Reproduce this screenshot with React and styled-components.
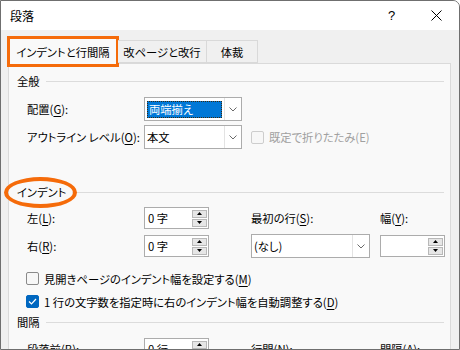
import React from 'react';
import styled, { createGlobalStyle } from 'styled-components';

const GlobalStyle = createGlobalStyle`
  body {
    margin: 0;
    background: #fff;
    font-family: "Noto Sans CJK JP", "Noto Sans", sans-serif;
    font-size: 11.3px;
    font-feature-settings: "palt";
    color: #000;
  }
`;

const Window = styled.div`
  width: 460px;
  height: 350px;
  box-sizing: border-box;
  border: 1px solid #6f6f6f;
  border-top-right-radius: 7px;
  background: #f0f0f0;
  display: flex;
  flex-direction: column;
  overflow: hidden;
`;

const TitleBar = styled.div`
  height: 29px;
  flex: none;
  background: #fff;
  display: flex;
  align-items: center;
  padding-left: 9px;
`;

const Title = styled.div`
  flex: 1;
  font-size: 12px;
`;

const TitleButton = styled.div`
  width: 45px;
  height: 29px;
  display: flex;
  align-items: center;
  justify-content: center;
  font-family: "Liberation Sans", sans-serif;
  font-size: 13px;
`;

const Body = styled.div`
  flex: 1;
  display: flex;
  flex-direction: column;
  padding: 8px 8px 0 7px;
  min-height: 0;
`;

const TabRow = styled.div`
  display: flex;
  align-items: flex-end;
  height: 26px;
  position: relative;
  z-index: 1;
`;

const Tab = styled.div`
  position: relative;
  box-sizing: border-box;
  width: ${p => p.$w}px;
  height: ${p => (p.$active ? 26 : 23)}px;
  margin-bottom: ${p => (p.$active ? -1 : 0)}px;
  border: 1px solid #d9d9d9;
  border-bottom: ${p => (p.$active ? 'none' : '1px solid #d9d9d9')};
  border-left: ${p => (p.$first || p.$active ? '1px solid #d9d9d9' : 'none')};
  background: ${p => (p.$active ? '#f9f9f9' : '#f0f0f0')};
  display: flex;
  align-items: center;
  justify-content: center;
  white-space: nowrap;
`;

const TabHighlight = styled.div`
  position: absolute;
  left: -2px;
  top: -3px;
  width: 112px;
  height: 31px;
  box-sizing: border-box;
  border: 3px solid #f56b0a;
  pointer-events: none;
`;

const Panel = styled.div`
  flex: 1;
  background: #f9f9f9;
  border: 1px solid #dadada;
  border-bottom: none;
  width: 443px;
  box-sizing: border-box;
  padding: 9px 6px 0 8px;
  display: flex;
  flex-direction: column;
`;

const SectionHeader = styled.div`
  position: relative;
  height: 16px;
  display: flex;
  align-items: center;
  gap: 6px;
  margin-top: ${p => p.$mt || 0}px;
`;

const SectionRule = styled.div`
  flex: 1;
  height: 1px;
  background: #dcdcdc;
`;

const Annotation = styled.div`
  position: absolute;
  left: -13px;
  top: -7px;
  width: 73px;
  height: 31px;
  box-sizing: border-box;
  border: 4px solid #f56b0a;
  border-radius: 50%;
  pointer-events: none;
`;

const Grid = styled.div`
  display: grid;
  grid-template-columns: ${p => p.$cols};
  grid-auto-rows: ${p => p.$rowH}px;
  row-gap: ${p => p.$gap}px;
  align-items: center;
  margin: ${p => p.$mt}px 0 0 10px;
`;

const Label = styled.div`
  white-space: nowrap;
  color: ${p => (p.$disabled ? '#a0a0a0' : '#000')};
`;

const Key = styled.span`
  text-decoration: underline;
  text-underline-offset: 2px;
`;

const Select = styled.div`
  box-sizing: border-box;
  width: ${p => p.$w}px;
  height: 24px;
  border: 1px solid #acacac;
  background: #fff;
  display: flex;
`;

const SelectValue = styled.div`
  flex: 1;
  display: flex;
  align-items: center;
  padding: 0 2px;
  min-width: 0;
`;

const Highlight = styled.div`
  flex: 1;
  height: 17px;
  box-sizing: border-box;
  border: 1px dotted #3a2a10;
  background: #0078d7;
  color: #fff;
  display: flex;
  align-items: center;
  padding-left: 1px;
`;

const SelectButton = styled.div`
  width: 16px;
  border-left: 1px solid #e3e3e3;
  display: flex;
  align-items: center;
  justify-content: center;
`;

const Spin = styled.div`
  box-sizing: border-box;
  width: 65px;
  height: 22px;
  border: 1px solid #acacac;
  background: #fff;
  display: flex;
  align-items: center;
  padding: 0 1px 0 3px;
`;

const SpinText = styled.div`
  flex: 1;
`;

const SpinButtons = styled.div`
  width: 15px;
  display: flex;
  flex-direction: column;
  gap: 1px;
`;

const SpinButton = styled.div`
  height: 8px;
  box-sizing: border-box;
  border: 1px solid #b8b8b8;
  background: #e6e6e6;
  display: flex;
  align-items: center;
  justify-content: center;
`;

const CheckRow = styled.div`
  display: flex;
  align-items: center;
  gap: 5px;
  height: 23px;
  white-space: nowrap;
`;

const Box = styled.div`
  width: 13px;
  height: 13px;
  box-sizing: border-box;
  border-radius: 2px;
  border: 1px solid ${p => (p.$checked ? '#0067c0' : p.$disabled ? '#cdcdcd' : '#8a8a8a')};
  background: ${p => (p.$checked ? '#0067c0' : '#f7f7f7')};
  display: flex;
  align-items: center;
  justify-content: center;
`;

const CheckList = styled.div`
  margin: 10px 0 0 9px;
`;

const Chevron = () => (
  <svg width="8" height="5" viewBox="0 0 8 5">
    <path d="M0.5 0.5 L4 4 L7.5 0.5" fill="none" stroke="#6a6a6a" strokeWidth="1" />
  </svg>
);

const Arrow = ({ up }) => (
  <svg width="5" height="3" viewBox="0 0 5 3">
    <path d={up ? 'M2.5 0 L5 3 L0 3 Z' : 'M0 0 L5 0 L2.5 3 Z'} fill="#000" />
  </svg>
);

function Dropdown({ w, value, selected }) {
  return (
    <Select $w={w}>
      <SelectValue>
        {selected ? <Highlight>{value}</Highlight> : value}
      </SelectValue>
      <SelectButton>
        <Chevron />
      </SelectButton>
    </Select>
  );
}

function Spinner({ value }) {
  return (
    <Spin>
      <SpinText>{value}</SpinText>
      <SpinButtons>
        <SpinButton><Arrow up /></SpinButton>
        <SpinButton><Arrow /></SpinButton>
      </SpinButtons>
    </Spin>
  );
}

function Check({ checked, disabled, children }) {
  return (
    <CheckRow>
      <Box $checked={checked} $disabled={disabled}>
        {checked && (
          <svg width="9" height="7" viewBox="0 0 9 7">
            <path d="M1 3.5 L3.5 6 L8 1" fill="none" stroke="#fff" strokeWidth="1.2" />
          </svg>
        )}
      </Box>
      <Label $disabled={disabled}>{children}</Label>
    </CheckRow>
  );
}

export default function App() {
  return (
    <>
      <GlobalStyle />
      <Window>
        <TitleBar>
          <Title>段落</Title>
          <TitleButton>?</TitleButton>
          <TitleButton>
            <svg width="11" height="11" viewBox="0 0 11 11">
              <path d="M0.5 0.5 L10.5 10.5 M10.5 0.5 L0.5 10.5" stroke="#000" strokeWidth="1" />
            </svg>
          </TitleButton>
        </TitleBar>
        <Body>
          <TabRow>
            <Tab $w={110} $active $first>
              インデントと行間隔
              <TabHighlight />
            </Tab>
            <Tab $w={89}>改ページと改行</Tab>
            <Tab $w={51}>体裁</Tab>
          </TabRow>
          <Panel>
            <SectionHeader>
              <Label>全般</Label>
              <SectionRule />
            </SectionHeader>
            <Grid $cols="117px 98px 9px auto" $rowH={24} $gap={4} $mt={8}>
              <Label>配置(<Key>G</Key>):</Label>
              <Dropdown w={98} value="両端揃え" selected />
              <span />
              <span />
              <Label>アウトライン レベル(<Key>O</Key>):</Label>
              <Dropdown w={98} value="本文" />
              <span />
              <Check disabled>既定で折りたたみ(E)</Check>
            </Grid>
            <SectionHeader $mt={35}>
              <Label>インデント</Label>
              <SectionRule />
              <Annotation />
            </SectionHeader>
            <Grid $cols="117px 65px 42px 129px 65px" $rowH={22} $gap={6} $mt={7}>
              <Label>左(<Key>L</Key>):</Label>
              <Spinner value="0 字" />
              <span />
              <Label>最初の行(<Key>S</Key>):</Label>
              <Label>幅(<Key>Y</Key>):</Label>
              <Label>右(<Key>R</Key>):</Label>
              <Spinner value="0 字" />
              <span />
              <Dropdown w={119} value="(なし)" />
              <Spin>
                <SpinText />
                <SpinButtons>
                  <SpinButton><Arrow up /></SpinButton>
                  <SpinButton><Arrow /></SpinButton>
                </SpinButtons>
              </Spin>
            </Grid>
            <CheckList>
              <Check>見開きページのインデント幅を設定する(<Key>M</Key>)</Check>
              <Check checked>1 行の文字数を指定時に右のインデント幅を自動調整する(<Key>D</Key>)</Check>
            </CheckList>
            <SectionHeader $mt={1}>
              <Label>間隔</Label>
              <SectionRule />
            </SectionHeader>
            <Grid $cols="117px 65px 42px 129px 65px" $rowH={22} $gap={6} $mt={8}>
              <Label>段落前(<Key>B</Key>):</Label>
              <Spinner value="0 行" />
              <span />
              <Label>行間(<Key>N</Key>):</Label>
              <Label>間隔(<Key>A</Key>):</Label>
            </Grid>
          </Panel>
        </Body>
      </Window>
    </>
  );
}
